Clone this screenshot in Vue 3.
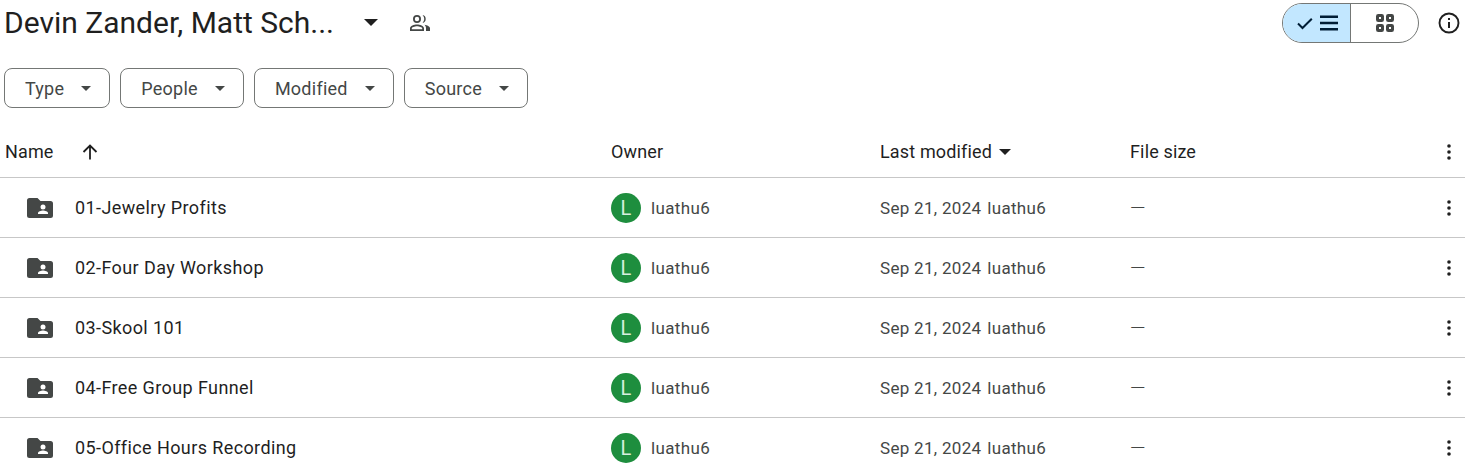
<script setup>
const chips = ['Type', 'People', 'Modified', 'Source']
const rows = ['01-Jewelry Profits', '02-Four Day Workshop', '03-Skool 101', '04-Free Group Funnel', '05-Office Hours Recording']
</script>

<template>
  <main class="page">
    <header class="top">
      <h1 class="title">Devin Zander, Matt Sch...</h1>
      <svg class="title-caret" width="14" height="7" viewBox="0 0 14 7"><path d="M0 0h14L7 7z" fill="#1f1f1f" /></svg>
      <svg class="people" width="24" height="24" viewBox="0 0 24 24" fill="#444746">
        <path d="M9 12a4 4 0 1 0 0-8 4 4 0 0 0 0 8zm0-6.200a2.200 2.200 0 1 1 0 4.400 2.200 2.200 0 0 1 0-4.400zM9 13.500c-2.900 0-7 1.400-7 3.800V20h14v-2.700c0-2.400-4.100-3.800-7-3.800zm-5.200 4.700v-.9c0-.8 2.800-2 5.200-2s5.200 1.200 5.200 2v.9H3.800zM14.600 4.100a4 4 0 0 1 0 7.800 6 6 0 0 0 0-7.800zM16.500 13.700c2.600.4 5.500 1.500 5.500 3.600V20h-4v-2.700c0-1.500-.6-2.700-1.500-3.600z" />
      </svg>
      <div class="spacer"></div>
      <div class="toggle">
        <div class="seg seg-on">
          <svg width="18" height="18" viewBox="0 0 18 18"><path d="M2 9.500l4.500 4.500 9.300-9.300" fill="none" stroke="#001d35" stroke-width="2" /></svg>
          <svg width="18" height="16" viewBox="0 0 18 16" fill="#001d35"><path d="M0 .5h18v2.500H0zM0 6.800h18v2.500H0zM0 13h18v2.500H0z" /></svg>
        </div>
        <div class="seg seg-off">
          <svg width="18" height="18" viewBox="0 0 18 18" fill="none" stroke="#444746" stroke-width="3"><rect x="1.500" y="1.500" width="5" height="5" rx=".8" /><rect x="11.500" y="1.500" width="5" height="5" rx=".8" /><rect x="1.500" y="11.500" width="5" height="5" rx=".8" /><rect x="11.500" y="11.500" width="5" height="5" rx=".8" /></svg>
        </div>
      </div>
      <svg class="info" width="22" height="22" viewBox="0 0 22 22" fill="none"><circle cx="11" cy="11" r="9.500" stroke="#1f1f1f" stroke-width="1.900" /><path d="M10 10h2v6h-2zM10 6h2v2h-2z" fill="#1f1f1f" /></svg>
    </header>

    <div class="chips">
      <button v-for="c in chips" :key="c" class="chip">
        <span>{{ c }}</span>
        <svg width="10" height="5" viewBox="0 0 10 5"><path d="M0 0h10L5 5z" fill="#444746" /></svg>
      </button>
    </div>

    <div class="grid head">
      <div class="name-head">
        <span>Name</span>
        <svg width="16" height="16" viewBox="0 0 16 16"><path d="M8 15.500V2M1.500 8L8 1.500 14.500 8" fill="none" stroke="#1f1f1f" stroke-width="1.800" /></svg>
      </div>
      <div>Owner</div>
      <div class="mod-head">
        <span>Last modified</span>
        <svg width="12" height="6" viewBox="0 0 12 6"><path d="M0 0h12L6 6z" fill="#1f1f1f" /></svg>
      </div>
      <div>File size</div>
      <svg class="dots" width="4" height="16" viewBox="0 0 4 16" fill="#1f1f1f"><circle cx="2" cy="2" r="1.800" /><circle cx="2" cy="8" r="1.800" /><circle cx="2" cy="14" r="1.800" /></svg>
    </div>

    <div v-for="r in rows" :key="r" class="grid row">
      <div class="name">
        <svg width="26" height="20" viewBox="0 0 26 20">
          <path d="M2.500 0h8l3 3h10A2.500 2.500 0 0 1 26 5.500v12a2.500 2.500 0 0 1-2.500 2.500h-21A2.500 2.500 0 0 1 0 17.500v-15A2.500 2.500 0 0 1 2.500 0z" fill="#444746" />
          <circle cx="16" cy="9" r="2.500" fill="#fff" />
          <path d="M11 16v-1c0-1.500 3-2.500 5-2.500s5 1 5 2.500v1z" fill="#fff" />
        </svg>
        <span class="file">{{ r }}</span>
      </div>
      <div class="owner">
        <span class="avatar">L</span>
        <span>luathu6</span>
      </div>
      <div class="muted mod"><span>Sep 21, 2024</span><span>luathu6</span></div>
      <div class="muted dash">—</div>
      <svg class="dots" width="4" height="16" viewBox="0 0 4 16" fill="#1f1f1f"><circle cx="2" cy="2" r="1.800" /><circle cx="2" cy="8" r="1.800" /><circle cx="2" cy="14" r="1.800" /></svg>
    </div>
  </main>
</template>

<style>
html, body { margin: 0; background: #fff; overflow: hidden; }
</style>

<style scoped>
.page {
  width: 1465px;
  height: 471px;
  overflow: hidden;
  font-family: Roboto, "Open Sans", sans-serif;
  color: #1f1f1f;
  font-size: 17px;
}
.top {
  display: flex;
  align-items: center;
  height: 45px;
  padding-left: 4px;
  padding-right: 5px;
}
.title {
  margin: 0;
  width: 356px;
  font-size: 30px;
  font-weight: 400;
  white-space: nowrap;
}
.title-caret { margin-left: 4px; }
.people { margin-left: 30px; }
.spacer { flex: 1; }
.toggle {
  display: flex;
  width: 135px;
  height: 38px;
  border: 1px solid #747775;
  border-radius: 20px;
  overflow: hidden;
}
.seg { display: flex; align-items: center; justify-content: center; }
.seg-on { width: 67px; background: #c2e7ff; border-right: 1px solid #747775; gap: 6px; }
.seg-off { flex: 1; }
.info { margin-left: 19px; }
.chips {
  display: flex;
  gap: 10px;
  margin-top: 23px;
  padding-left: 4px;
}
.chip {
  display: flex;
  align-items: center;
  gap: 17px;
  height: 40px;
  padding: 0 18px 0 20px;
  border: 1px solid #747775;
  border-radius: 8px;
  background: #fff;
  color: #444746;
  font: inherit;
  font-size: 18px;
  letter-spacing: .25px;
}
.grid {
  display: grid;
  grid-template-columns: 606px 269px 250px 1fr 4px;
  align-items: center;
  padding: 0 14px 0 5px;
  border-bottom: 1px solid #c7c7c7;
  box-sizing: border-box;
}
.head { height: 70px; padding-top: 18px; font-size: 18px; letter-spacing: .15px; }
.row { height: 60px; }
.name-head { display: flex; align-items: center; gap: 28px; }
.mod-head { display: flex; align-items: center; gap: 7px; }
.name { display: flex; align-items: center; gap: 22px; padding-left: 22px; }
.file { font-size: 18px; letter-spacing: .4px; }
.owner { display: flex; align-items: center; gap: 10px; color: #444746; letter-spacing: .35px; }
.avatar {
  display: flex;
  align-items: center;
  justify-content: center;
  width: 30px;
  height: 30px;
  border-radius: 50%;
  background: #1e8e3e;
  color: #d7eedd;
  font-size: 20px;
}
.muted { color: #444746; letter-spacing: .3px; }
.mod { display: flex; gap: 6px; }
.dash { font-size: 20px; font-weight: 300; }
</style>
